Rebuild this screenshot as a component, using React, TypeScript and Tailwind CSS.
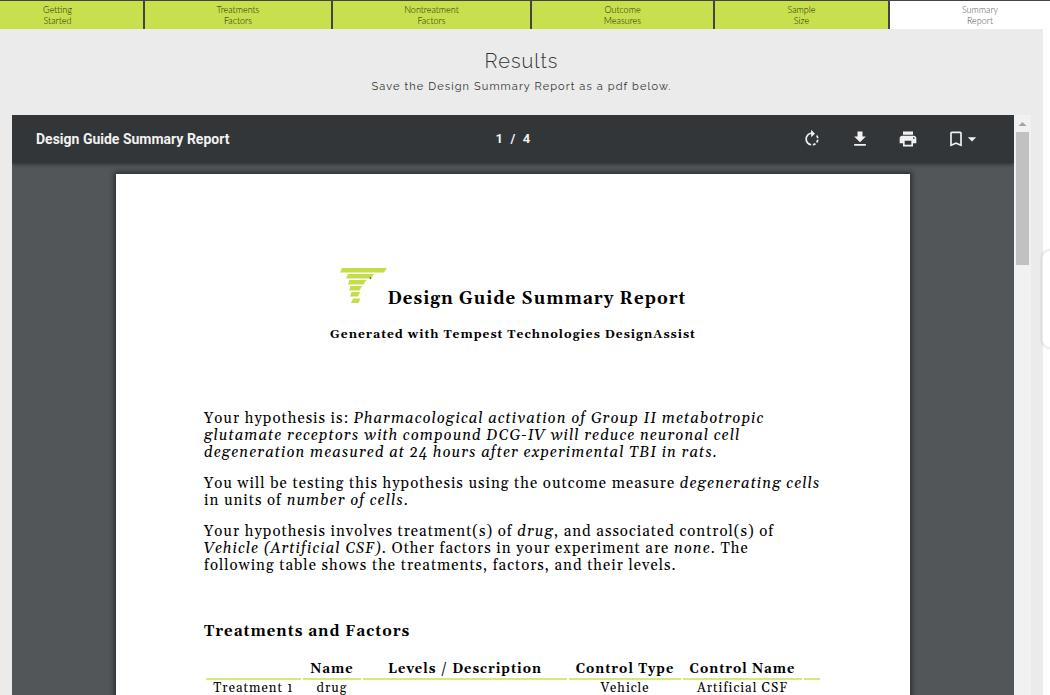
import React from "react";
import {
  MdArrowDropDown,
  MdBookmarkBorder,
  MdFileDownload,
  MdPrint,
  MdRotateRight,
} from "react-icons/md";

const steps = [
  { top: "Getting", bottom: "Started", style: "bg-[#c8e04d] text-[#20240c] pr-7" },
  { top: "Treatments", bottom: "Factors", style: "bg-[#c8e04d] text-[#20240c]" },
  { top: "Nontreatment", bottom: "Factors", style: "bg-[#c8e04d] text-[#20240c]" },
  { top: "Outcome", bottom: "Measures", style: "bg-[#c8e04d] text-[#20240c]" },
  { top: "Sample", bottom: "Size", style: "bg-[#c8e04d] text-[#20240c]" },
  { top: "Summary", bottom: "Report", style: "bg-white text-[#555555] pl-5" },
];

function StepTabs() {
  return (
    <nav
      aria-label="Steps"
      className="grid shrink-0 grid-cols-[143fr_186fr_197fr_181fr_173fr_160fr] gap-x-[2px] border-t border-[#444444] bg-[#444444] font-['Lato',sans-serif] font-light"
    >
      {steps.map((s) => (
        <a
          key={s.top}
          href="#step"
          className={`block h-7 pt-[3px] text-center text-[9px] leading-[11px] ${s.style}`}
        >
          {s.top}
          <br />
          {s.bottom}
        </a>
      ))}
    </nav>
  );
}

function ViewerToolbar() {
  return (
    <header className="relative z-10 grid h-12 shrink-0 grid-cols-[1fr_auto_1fr] items-center bg-[#323639] px-6 font-['Roboto',sans-serif] text-[#f1f1f1] shadow-[0_1px_4px_rgba(0,0,0,0.5)]">
      <h2 className="text-sm font-bold">Design Guide Summary Report</h2>
      <div className="text-[13px] font-bold tracking-wide">1&nbsp; /&nbsp; 4</div>
      <div className="flex items-center justify-end gap-7 pr-5">
        <button type="button" aria-label="Rotate clockwise">
          <MdRotateRight className="size-5" />
        </button>
        <button type="button" aria-label="Download">
          <MdFileDownload className="size-5" />
        </button>
        <button type="button" aria-label="Print">
          <MdPrint className="size-5" />
        </button>
        <button type="button" aria-label="Bookmarks" className="-mr-3 flex items-center">
          <MdBookmarkBorder className="size-5" />
          <MdArrowDropDown className="-ml-1 size-5" />
        </button>
      </div>
    </header>
  );
}

function Logo() {
  return (
    <svg viewBox="0 0 48 38" className="h-[38px] w-12" fill="#c5de46" aria-hidden="true">
      <path d="M2 1h45l-3 4.500H0z" />
      <path d="M8 7h26l-3.500 4.500H6z" />
      <path d="M9.500 13h17l-3 4.500H8z" />
      <path d="M10.500 19h11.500l-2.500 4.500H9z" />
      <path d="M11.500 25h8.500l-2 4.500h-8z" />
      <path d="M13 31.500h7.500l-2 4.500h-7.500z" />
      <circle cx="30.500" cy="11" r="0.900" fill="#5c6b3a" />
    </svg>
  );
}

const th = "border-b-2 border-[#d6e97a] font-bold";

function FactorsTable() {
  return (
    <table className="mt-[19px] w-full table-fixed border-separate border-spacing-x-[2px] border-spacing-y-0 text-center text-[13px] leading-4">
      <colgroup>
        <col className="w-[95px]" />
        <col className="w-[58px]" />
        <col />
        <col className="w-[112px]" />
        <col className="w-[119px]" />
        <col className="w-4" />
      </colgroup>
      <thead>
        <tr>
          <th className={`${th} pb-px`}></th>
          <th className={`${th} pb-px`}>Name</th>
          <th className={`${th} pb-px`}>Levels / Description</th>
          <th className={`${th} pb-px whitespace-nowrap`}>Control Type</th>
          <th className={`${th} pb-px whitespace-nowrap`}>Control Name</th>
          <th className={`${th} pb-px`}></th>
        </tr>
      </thead>
      <tbody>
        <tr>
          <td className="whitespace-nowrap">Treatment 1</td>
          <td>drug</td>
          <td></td>
          <td>Vehicle</td>
          <td className="whitespace-nowrap">Artificial CSF</td>
          <td></td>
        </tr>
      </tbody>
    </table>
  );
}

function ReportPage() {
  return (
    <article className="mx-auto mt-[11px] min-h-[1122px] w-[794px] max-w-full bg-white px-[88px] pt-[93px] font-['Gelasio','Georgia','Liberation_Serif',serif] tracking-[1px] text-black shadow-[0_0_5px_2px_rgba(0,0,0,0.45)]">
      <div className="text-center">
        <div className="flex items-start justify-center">
          <Logo />
          <h1 className="pt-5 text-[17px] leading-6 font-bold">Design Guide Summary Report</h1>
        </div>
        <p className="mt-4 text-xs leading-4 font-bold">
          Generated with Tempest Technologies DesignAssist
        </p>
      </div>
      <div className="mt-[67px] space-y-[14px] text-[15px] leading-[17px] whitespace-nowrap">
        <p>
          Your hypothesis is: <i>Pharmacological activation of Group II metabotropic
          <br />
          glutamate receptors with compound DCG-IV will reduce neuronal cell
          <br />
          degeneration measured at 24 hours after experimental TBI in rats.</i>
        </p>
        <p>
          You will be testing this hypothesis using the outcome measure <i>degenerating cells</i>
          <br />
          in units of <i>number of cells</i>.
        </p>
        <p>
          Your hypothesis involves treatment(s) of <i>drug</i>, and associated control(s) of
          <br />
          <i>Vehicle (Artificial CSF)</i>. Other factors in your experiment are <i>none</i>. The
          <br />
          following table shows the treatments, factors, and their levels.
        </p>
      </div>
      <h2 className="mt-12 text-[15px] leading-5 font-bold">Treatments and Factors</h2>
      <FactorsTable />
    </article>
  );
}

function Scrollbar() {
  return (
    <div className="flex w-[17px] shrink-0 flex-col items-center bg-[#f1f1f1]" aria-hidden="true">
      <svg viewBox="0 0 17 17" className="size-[17px]" fill="#a3a3a3">
        <path d="M4.500 11h8l-4-4z" />
      </svg>
      <div className="h-[133px] w-[13px] bg-[#c1c1c1]" />
    </div>
  );
}

export default function App() {
  return (
    <div className="relative flex h-screen flex-col overflow-hidden bg-white font-['Raleway','Lato',sans-serif]">
      <StepTabs />
      <main className="mr-[7px] flex min-h-0 flex-1 flex-col bg-[#ebebeb] px-3">
        <div className="pt-[18px] pb-[18px] text-center text-[#333333]">
          <h1 className="text-xl leading-7 font-light tracking-[1px]">Results</h1>
          <p className="mt-[2px] text-[11px] leading-5 tracking-widest">
            Save the Design Summary Report as a pdf below.
          </p>
        </div>
        <section aria-label="Report viewer" className="flex min-h-0 flex-1">
          <div className="flex min-w-0 flex-1 flex-col overflow-hidden bg-[#525659]">
            <ViewerToolbar />
            <ReportPage />
          </div>
          <Scrollbar />
        </section>
      </main>
      <aside
        aria-label="Side panel"
        className="absolute top-[250px] -right-3 h-[98px] w-5 rounded-lg border border-[#eeeeee] bg-white shadow-[0_0_3px_rgba(0,0,0,0.2)]"
      />
    </div>
  );
}
